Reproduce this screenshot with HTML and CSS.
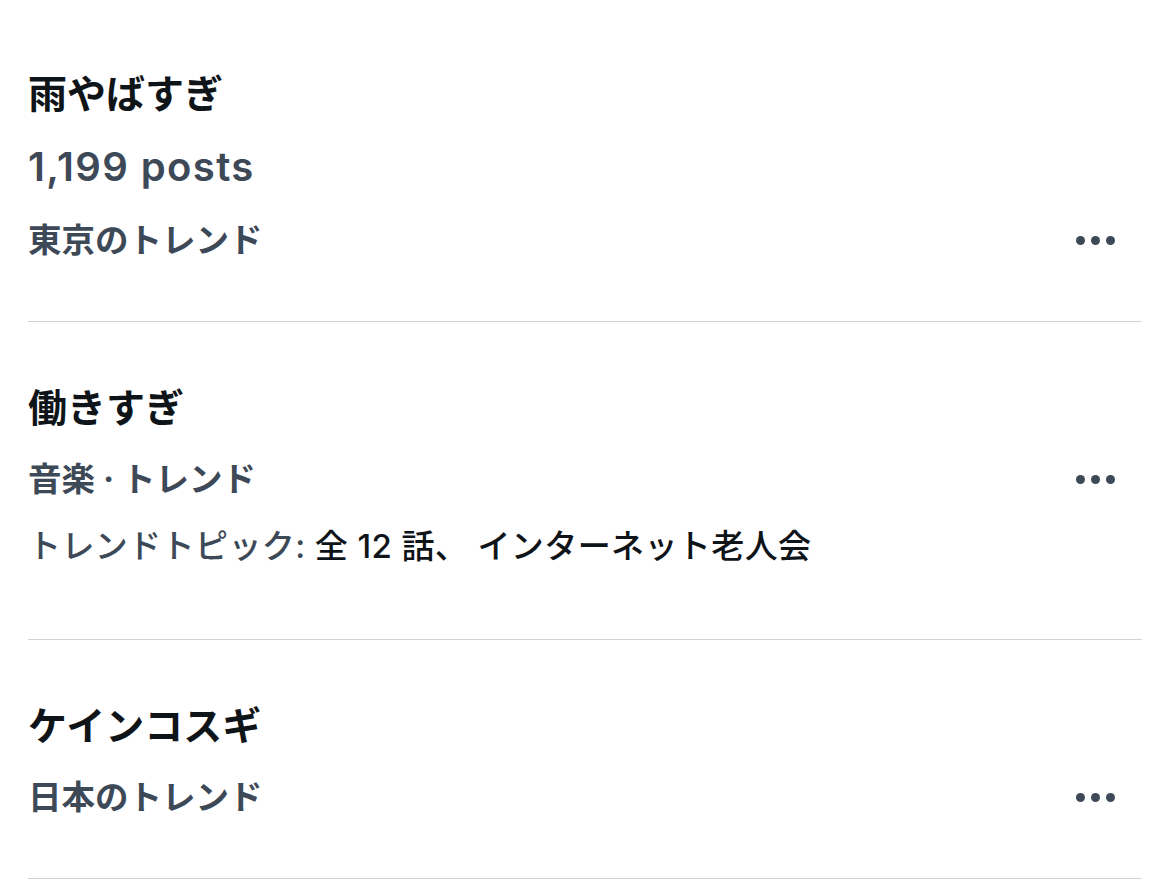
FILE: index.html
```html
<!DOCTYPE html>
<html lang="ja">
<head>
    <meta charset="UTF-8">
    <meta name="viewport" content="width=device-width, initial-scale=1.0">
    <title>トレンド</title>
    <link rel="stylesheet" href="styles.css">
</head>
<body>
    <div class="trends">
        <div class="trend">
            <div class="trend-title">雨やばすぎ</div>
            <div class="trend-count">1,199 posts</div>
            <div class="trend-row">
                <span class="trend-category">東京のトレンド</span>
                <span class="more"><i></i><i></i><i></i></span>
            </div>
        </div>

        <div class="trend">
            <div class="trend-title">働きすぎ</div>
            <div class="trend-row">
                <span class="trend-category">音楽 · トレンド</span>
                <span class="more"><i></i><i></i><i></i></span>
            </div>
            <div class="trend-topic">
                <span class="topic-label">トレンドトピック:</span> 全 12 話、 インターネット老人会
            </div>
        </div>

        <div class="trend">
            <div class="trend-title">ケインコスギ</div>
            <div class="trend-row">
                <span class="trend-category">日本のトレンド</span>
                <span class="more"><i></i><i></i><i></i></span>
            </div>
        </div>
    </div>
</body>
</html>
```

FILE: styles.css
```css
body {
    margin: 0;
    background-color: #fff;
    font-family: Inter, "Noto Sans CJK JP", sans-serif;
    color: #0f1419;
}
.trends {
    padding: 8px 28px 0 28px;
}
.trend {
    padding: 62px 0 58px 0;
    border-bottom: 1px solid #d3d3d3;
}
.trend-title {
    font-size: 39px;
    font-weight: 700;
    line-height: 48px;
}
.trend-count {
    margin-top: 26px;
    font-size: 40px;
    font-weight: 600;
    letter-spacing: 1.4px;
    line-height: 46px;
    color: #3d4957;
}
.trend-row {
    display: flex;
    align-items: center;
    justify-content: space-between;
    margin-top: 24px;
    padding-right: 27px;
}
.trend-count + .trend-row {
    margin-top: 27px;
}
.trend-category {
    font-size: 33.5px;
    font-weight: 700;
    line-height: 46px;
    color: #3d4957;
}
.trend-topic {
    margin-top: 21px;
    margin-bottom: 12px;
    font-size: 33px;
    font-weight: 500;
    letter-spacing: 0.4px;
    line-height: 46px;
    color: #0f1419;
}
.topic-label {
    color: #3d4957;
}
.more {
    display: flex;
    gap: 6px;
}
.more i {
    width: 9px;
    height: 9px;
    border-radius: 50%;
    background-color: #3d4957;
}
```
